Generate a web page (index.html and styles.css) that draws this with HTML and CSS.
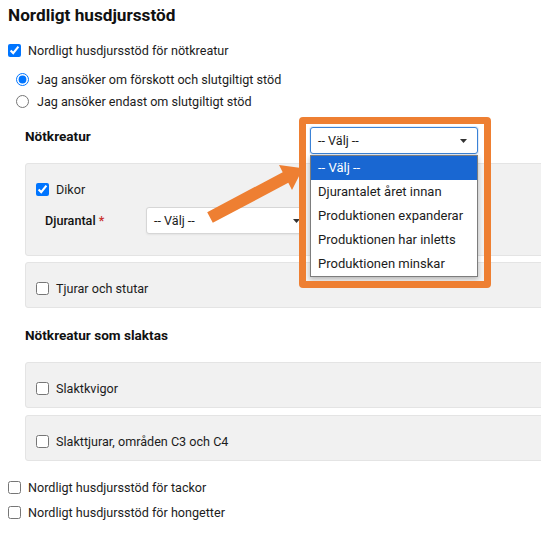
FILE: index.html
```html
<!DOCTYPE html>
<html lang="sv">
<head>
<meta charset="utf-8">
<title>Nordligt husdjursstöd</title>
<link rel="stylesheet" href="styles.css">
</head>
<body>
<h1 class="title">Nordligt husdjursstöd</h1>

<label class="row-check"><input type="checkbox" checked><span>Nordligt husdjursstöd för nötkreatur</span></label>

<div class="radios">
  <label class="row-radio"><input type="radio" name="typ" checked><span>Jag ansöker om förskott och slutgiltigt stöd</span></label>
  <label class="row-radio"><input type="radio" name="typ"><span>Jag ansöker endast om slutgiltigt stöd</span></label>
</div>

<section class="section">
  <div class="section-head">
    <h2 class="sub">Nötkreatur</h2>
    <div class="select-wrap">
      <div class="select focused"><span>-- Välj --</span><svg class="caret" width="7" height="4" viewBox="0 0 7 4"><path d="M0 0H7L3.5 4Z" fill="#333"/></svg></div>
      <ul class="popup">
        <li class="opt active">-- Välj --</li>
        <li class="opt">Djurantalet året innan</li>
        <li class="opt">Produktionen expanderar</li>
        <li class="opt">Produktionen har inletts</li>
        <li class="opt">Produktionen minskar</li>
      </ul>
    </div>
  </div>

  <div class="panel panel-tall">
    <label class="row-check"><input type="checkbox" checked><span>Dikor</span></label>
    <div class="field">
      <span class="field-label">Djurantal <span class="req">*</span></span>
      <div class="select small"><span>-- Välj --</span><svg class="caret" width="7" height="4" viewBox="0 0 7 4"><path d="M0 0H7L3.5 4Z" fill="#333"/></svg></div>
    </div>
  </div>
  <div class="panel">
    <label class="row-check"><input type="checkbox"><span>Tjurar och stutar</span></label>
  </div>

  <h2 class="sub sub-2">Nötkreatur som slaktas</h2>
  <div class="panel">
    <label class="row-check"><input type="checkbox"><span>Slaktkvigor</span></label>
  </div>
  <div class="panel">
    <label class="row-check"><input type="checkbox"><span>Slakttjurar, områden C3 och C4</span></label>
  </div>
</section>

<div class="bottom">
  <label class="row-check tall"><input type="checkbox"><span>Nordligt husdjursstöd för tackor</span></label>
  <label class="row-check tall"><input type="checkbox"><span>Nordligt husdjursstöd för hongetter</span></label>
</div>

<div class="mark-box"></div>
<svg class="mark-arrow" width="541" height="535" viewBox="0 0 541 535">
  <polygon points="207.2,212.2 282.7,172.2 279,165 303,168.3 292,190 288.3,182.8 212.8,222.8" fill="#ee7f32"/>
</svg>
</body>
</html>
```

FILE: styles.css
```css
html {
  overflow: hidden;
}
body {
  margin: 0;
  padding: 0 8px;
  font-family: Roboto, "Liberation Sans", Arial, sans-serif;
  font-size: 12.6px;
  color: #1c1c1c;
  background: #fff;
  position: relative;
  min-height: 535px;
}
.title {
  margin: 0;
  padding-top: 4px;
  font-size: 17.2px;
  line-height: 22px;
  font-weight: 700;
  color: #111;
}
.row-check,
.row-radio {
  display: flex;
  align-items: center;
  height: 20px;
}
.row-check input,
.row-radio input {
  margin: 0 7px 0 0;
  width: 13px;
  height: 13px;
  flex: none;
}
.row-radio input {
  margin-right: 8px;
}
body > .row-check {
  margin-top: 14px;
}
.radios {
  padding-left: 8px;
  margin-top: 8px;
}
.row-radio {
  height: 22px;
}
.section {
  margin-left: 17px;
  width: 560px;
}
.section-head {
  display: grid;
  grid-template-columns: 285px 168px;
  margin-top: 15px;
  height: 27px;
}
.sub {
  margin: 0;
  font-size: 13.6px;
  line-height: 18px;
  font-weight: 700;
  color: #111;
}
.sub-2 {
  margin-top: 18px;
  margin-bottom: 18px;
}
.select-wrap {
  position: relative;
}
.select {
  box-sizing: border-box;
  height: 27px;
  display: flex;
  align-items: center;
  justify-content: space-between;
  padding: 0 10px 0 7px;
  background: #fff;
  border: 1px solid #d6d6d6;
  border-radius: 3px;
  box-shadow: 0 1px 2px rgba(0, 0, 0, 0.06);
  color: #1c1c1c;
}
.select.focused {
  border-color: #3b82d6;
  box-shadow: 0 0 0 1px rgba(59, 130, 214, 0.15);
}
.select.small {
  width: 159px;
  padding-right: 4px;
}
.caret {
  flex: none;
}
.popup {
  position: absolute;
  left: 0;
  top: 28px;
  width: 168px;
  box-sizing: border-box;
  margin: 0;
  padding: 0;
  list-style: none;
  background: #fff;
  border: 1px solid #7d7d7d;
  box-shadow: 0 2px 5px rgba(0, 0, 0, 0.25);
  z-index: 2;
  font-size: 13px;
}
.opt {
  height: 24px;
  line-height: 24px;
  padding-left: 7px;
  white-space: nowrap;
}
.opt.active {
  background: #1967d2;
  color: #fff;
}
.panel {
  background: #f1f1f1;
  border: 1px solid #e4e4e4;
  border-radius: 3px;
  padding: 15px 10px 9px;
  margin-top: 7px;
}
.section-head + .panel {
  margin-top: 9px;
}
.panel-tall {
  padding-bottom: 21px;
}
.panel-tall + .panel {
  margin-top: 6px;
}
.sub-2 + .panel {
  margin-top: 0;
}
.field {
  display: flex;
  align-items: center;
  margin-top: 8px;
  padding-left: 9px;
}
.field-label {
  width: 101px;
  font-weight: 500;
  color: #111;
}
.req {
  color: #c9302c;
}
.bottom {
  margin-top: 14px;
}
.row-check.tall {
  height: 25px;
}
.mark-box {
  position: absolute;
  left: 299px;
  top: 117px;
  width: 178px;
  height: 157px;
  border: 7px solid #ee7f32;
  border-radius: 4px;
  pointer-events: none;
  z-index: 3;
}
.mark-arrow {
  position: absolute;
  left: 0;
  top: 0;
  pointer-events: none;
  z-index: 3;
}
```
